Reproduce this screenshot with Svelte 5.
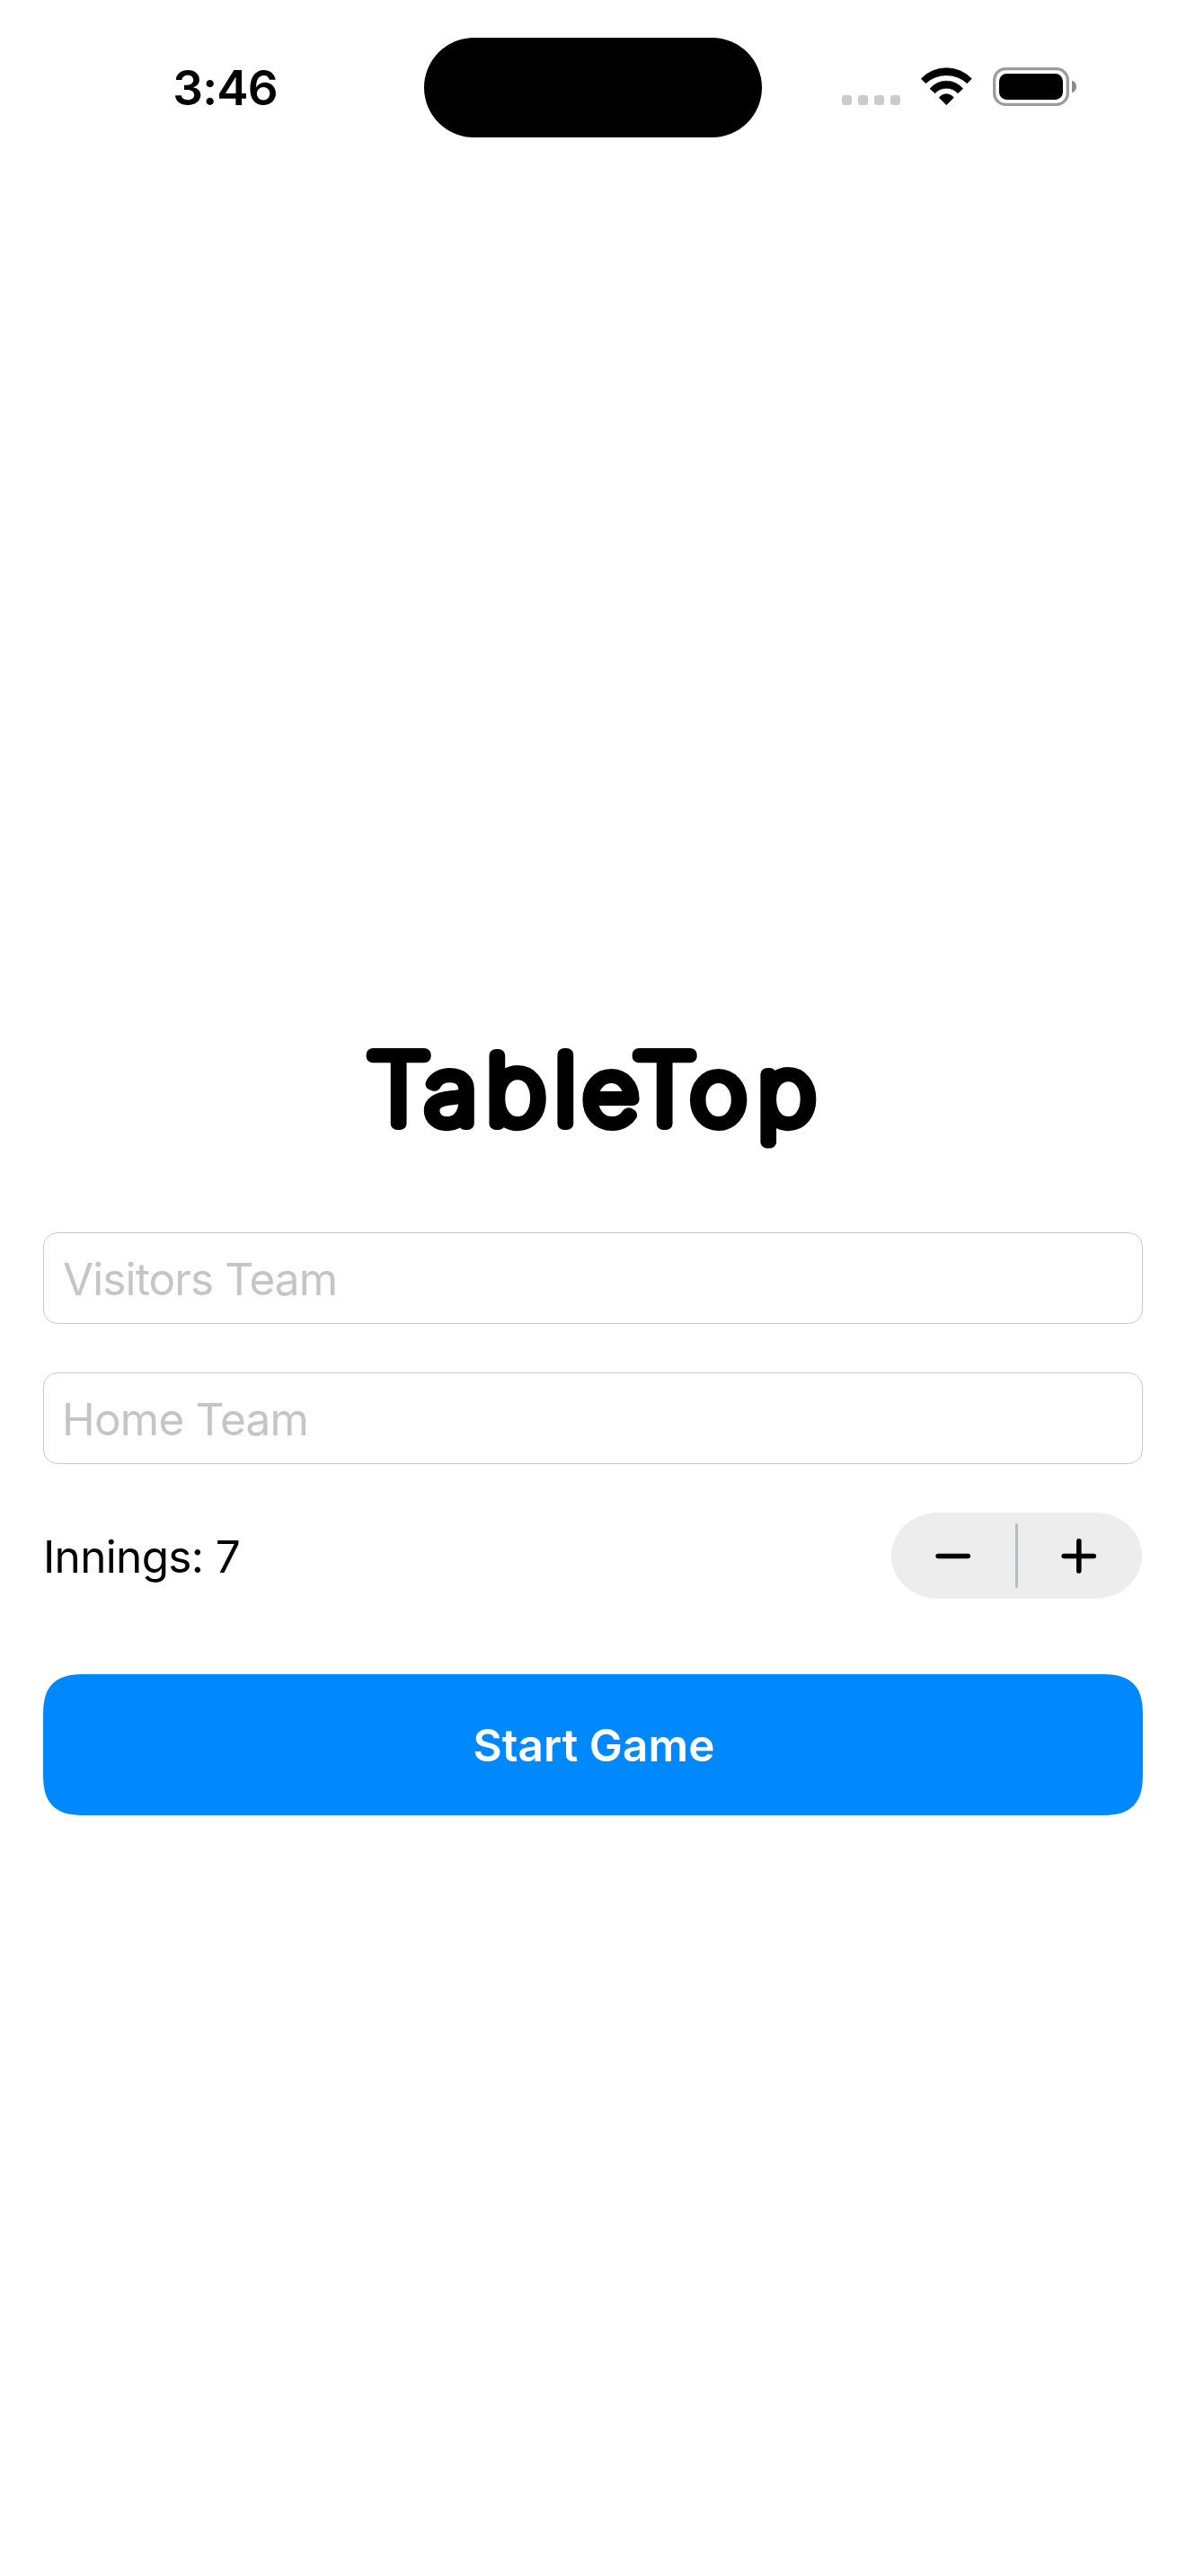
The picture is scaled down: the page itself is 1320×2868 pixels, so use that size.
<script>
  let visitors = $state('');
  let home = $state('');
  let innings = $state(7);

  // Each letter of the wordmark: glyph, x position and optical size
  const wordmark = [
    { ch: 'T', x: 7.2, size: 105.2 },
    { ch: 'a', x: 66.9, size: 99 },
    { ch: 'b', x: 128.2, size: 104 },
    { ch: 'l', x: 197, size: 106 },
    { ch: 'e', x: 226.7, size: 97 },
    { ch: 'T', x: 276.4, size: 105.2 },
    { ch: 'o', x: 335.3, size: 97 },
    { ch: 'p', x: 402.9, size: 101 }
  ];
</script>

<div class="screen">
  <header class="status">
    <span class="time">3:46</span>
    <div class="island"></div>
    <svg class="indicators" width="264" height="48" viewBox="0 0 264 48">
      <g fill="#cbcbcb">
        {#each [1, 19, 37, 55] as x}
          <rect {x} y="34" width="11" height="11" rx="3.2" />
        {/each}
      </g>
      <g transform="translate(87.33 1.33) scale(.33333)" stroke="#000" stroke-width="2" stroke-linejoin="round">
        <path d="M6 43A116 116 0 0 1 174 43L159 58A102 102 0 0 0 21 58Z" />
        <path d="M35 76A72 72 0 0 1 145 76L128 91A52 52 0 0 0 52 91Z" />
        <path d="M66 106A30 30 0 0 1 114 106L90 130Z" />
      </g>
      <rect x="170.7" y="4.7" width="81.6" height="39.6" rx="12.5" fill="none" stroke="#9b9b9b" stroke-width="3.3" />
      <rect x="176" y="10" width="71" height="29" rx="8.5" />
      <path d="M257 17.7C260.4 18.9 262 21.2 262 24.5S260.4 30.1 257 31.3Z" fill="#8c8c8c" />
    </svg>
  </header>

  <main>
    <h1>
      <svg width="520" height="130" viewBox="0 0 520 130">
        <text y="101.2" transform="scale(1.1 1)">{#each wordmark as l}<tspan x={l.x} font-size={l.size}>{l.ch}</tspan>{/each}</text>
      </svg>
    </h1>

    <input class="field visitors" placeholder="Visitors Team" bind:value={visitors} />
    <input class="field home" placeholder="Home Team" bind:value={home} />

    <div class="row">
      <span class="label">Innings: {innings}</span>
      <div class="stepper">
        <button aria-label="Decrement" onclick={() => innings--}>
          <svg width="42" height="42" viewBox="0 0 42 42"><path d="M4.2 21.5H37.3" /></svg>
        </button>
        <i></i>
        <button aria-label="Increment" onclick={() => innings++}>
          <svg width="42" height="42" viewBox="0 0 42 42"><path d="M3.2 21.5H36.3M19.8 4.8V38" /></svg>
        </button>
      </div>
    </div>

    <button class="start">Start Game</button>
  </main>
</div>

<style>
  :global(body) {
    margin: 0;
    background: #fff;
  }
  .screen {
    box-sizing: border-box;
    width: 1320px;
    height: 2868px;
    background: #fff;
    color: #000;
    font-family: Inter, 'Liberation Sans', sans-serif;
    font-size: 49.5px;
  }
  .status {
    display: flex;
    align-items: center;
    box-sizing: border-box;
    height: 193px;
    padding-left: 192.3px;
  }
  .time {
    width: 279.4px;
    padding-top: 2px;
    font-size: 53px;
    font-weight: 600;
    line-height: 64px;
    letter-spacing: -0.8px;
  }
  .island {
    width: 376.6px;
    height: 111px;
    margin-top: 1px;
    border-radius: 56px;
    background: #000;
  }
  .indicators {
    margin: -1px 0 0 87.7px;
  }
  main {
    display: flex;
    flex-direction: column;
    padding: 957px 48px 0;
  }
  h1 {
    display: flex;
    margin: 0 0 92px 352px;
    height: 130px;
  }
  h1 svg {
    overflow: visible;
  }
  h1 text {
    font-family: Inter, sans-serif;
    font-weight: 100;
    stroke: #000;
    stroke-width: 13.8px;
    stroke-linejoin: round;
  }
  .field {
    box-sizing: border-box;
    width: 100%;
    height: 102px;
    margin: 0 0 54px;
    padding: 1px 20px 0 21px;
    border: 1px solid #c9c9cb;
    border-radius: 16px;
    background: #fff;
    font: inherit;
    outline: none;
  }
  .visitors {
    letter-spacing: -0.9px;
  }
  .home {
    letter-spacing: -0.8px;
    padding-left: 20px;
  }
  .field::placeholder {
    color: #c5c5c7;
    opacity: 1;
  }
  .row {
    display: flex;
    align-items: center;
    justify-content: space-between;
    height: 96px;
    margin-bottom: 84px;
  }
  .label {
    padding-top: 2px;
    letter-spacing: -0.67px;
  }
  .stepper {
    display: flex;
    align-items: center;
    width: 279px;
    height: 96px;
    margin-right: 1px;
    border-radius: 52px / 48px;
    background: #ededed;
  }
  .stepper button {
    display: flex;
    flex: 1;
    align-items: center;
    justify-content: center;
    padding: 0;
    border: 0;
    background: none;
  }
  .stepper path {
    fill: none;
    stroke: #000;
    stroke-width: 5.6px;
    stroke-linecap: round;
  }
  .stepper i {
    width: 3px;
    height: 72px;
    border-radius: 1.5px;
    background: #b9babc;
  }
  .start {
    height: 157px;
    padding: 1px 0 0 2px;
    border: 0;
    border-radius: 38px;
    background: #0088ff;
    color: #fff;
    font: 600 49.5px Inter, sans-serif;
    letter-spacing: 0.1px;
  }
  @supports (corner-shape: squircle) {
    .start {
      border-radius: 48px;
      corner-shape: superellipse(1.48);
    }
  }
</style>
